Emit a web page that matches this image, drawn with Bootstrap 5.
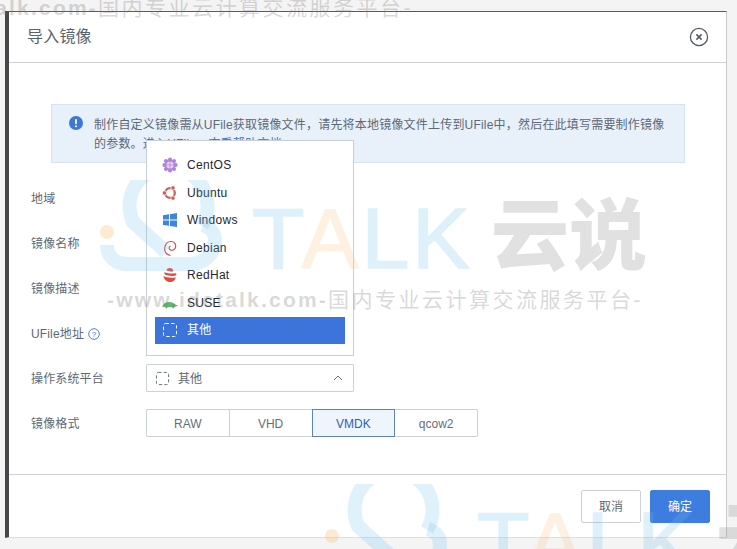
<!DOCTYPE html>
<html lang="zh">
<head>
<meta charset="utf-8">
<title>导入镜像</title>
<link href="https://cdn.jsdelivr.net/npm/bootstrap@5.3.0/dist/css/bootstrap.min.css" rel="stylesheet">
<style>
html,body{height:549px;overflow:hidden}
body{background:#f4f4f5;font-family:"Liberation Sans","Noto Sans CJK SC",sans-serif;font-size:12px;color:#5d6875;padding:11px 10px 0 5px}
.shell{height:527px;background:#fff;border-left:4px solid #45474b;border-top:1px solid #5a5c60;border-right:1px solid #c6cacf;border-bottom:1px solid #dcdee1}
.dlg-head{height:51px;border-bottom:1px solid #ced3d9;padding:0 17px 0 18px;flex:none}
.dlg-title{font-size:16px;color:#59636f;letter-spacing:.2px}
.notice{margin:41px 41px 21px 42px;height:59px;background:#e8f0fa;border:1px solid #d6e3f2;padding:11px 10px 0 17px;line-height:19px;gap:11px;letter-spacing:.2px;flex:none}
.notice svg{flex:none}
.notice a{color:#3d6fc4;text-decoration:none}
.form-line{height:28px;margin-bottom:17px;padding-left:22px;flex:none}
.form-line label{width:115px;flex:none;margin:0;padding-top:1px;color:#5d6875;letter-spacing:.15px}
.ctl{width:208px;height:28px;flex:none}
.pick{border:1px solid #ccd1d7;border-radius:1px;padding:0 10px 0 8px;gap:8px;background:#fff;color:#5d6875}
.pick span{padding-top:1px}
.os-menu{position:absolute;left:0;bottom:100%;margin-bottom:8px;width:208px;display:block;border:1px solid #c9ced4;border-radius:0;padding:10.5px 8px 11px;font-size:12px;min-width:0;letter-spacing:.3px}
.os-menu .dropdown-item{height:27.5px;padding:0 7px;gap:9px;color:#1f2733;display:flex;align-items:center}
.os-menu .dropdown-item.active{background:#3d74dc;color:#fff}
.seg .btn{width:83.75px;height:28px;padding:1px 0 0;font-size:12px;color:#666e79;background:#fff;border:1px solid #ccd1d7;border-radius:1px}
.seg .btn.is-on{background:#eef5fd;border-color:#5d83b8;color:#2f62b0;position:relative;z-index:1}
.dlg-foot{height:63px;border-top:1px solid #ced3d9;padding:15px 16px 0 0;gap:9px;margin-top:auto;flex:none}
.dlg-foot .btn{width:60px;height:33px;padding:0;font-size:12px;border-radius:2px}
.btn-cancel{border:1px solid #ccd1d7;color:#5d6875;background:#fff}
.btn-ok{background:#3e7de0;border:1px solid #3e7de0;color:#fff}
.wm{position:absolute;left:0;top:0;width:737px;height:549px;overflow:hidden;pointer-events:none;z-index:2000}
.wm-set{position:absolute;width:560px;height:140px}
.wm-one{left:100px;top:180px}
.wm-two{left:325px;top:484px}
.wm-three{left:-130px;top:-112px}
.wm-logo{position:absolute;left:0;top:0}
.wm-talk{position:absolute;left:152px;top:15px;font-size:86px;line-height:1;letter-spacing:3px;color:#6ebeeb;-webkit-text-stroke:1.6px #6ebeeb;opacity:.22;white-space:nowrap}
.wm-talk i{font-style:normal;color:#fbc27c;-webkit-text-stroke:1px #fbc27c}
.wm-cn{position:absolute;left:391px;top:7px;font-size:78px;line-height:100px;font-weight:900;color:rgba(140,140,140,.26);white-space:nowrap}
.wm-line{position:absolute;left:7px;top:106px;font-size:21px;line-height:28px;letter-spacing:2.5px;color:rgba(120,120,120,.3);white-space:nowrap}
.wm-line b{font-weight:700;letter-spacing:2.2px}
</style>
</head>
<body>
<div class="shell d-flex flex-column position-relative">
  <div class="dlg-head d-flex align-items-center justify-content-between">
    <div class="dlg-title">导入镜像</div>
    <svg width="20" height="20" viewBox="0 0 20 20" fill="none" stroke="#555c66"><circle cx="10" cy="10" r="8.6" stroke-width="1.3"/><path d="M7.4 7.4l5.2 5.2M12.6 7.4l-5.2 5.2" stroke-width="1.6"/></svg>
  </div>
  <div class="notice d-flex">
    <svg width="14" height="14" viewBox="0 0 14 14"><circle cx="7" cy="7" r="7" fill="#3d78d8"/><rect x="6.1" y="3" width="1.8" height="5.2" rx=".9" fill="#fff"/><circle cx="7" cy="10.2" r="1" fill="#fff"/></svg>
    <div>制作自定义镜像需从UFile获取镜像文件，请先将本地镜像文件上传到UFile中，然后在此填写需要制作镜像<br>的参数。<a href="#">进入UFile</a>，<a href="#">查看帮助文档</a></div>
  </div>
  <div class="form-line d-flex align-items-center"><label>地域</label><div class="ctl"></div></div>
  <div class="form-line d-flex align-items-center"><label>镜像名称</label><div class="ctl"></div></div>
  <div class="form-line d-flex align-items-center"><label>镜像描述</label><div class="ctl"></div></div>
  <div class="form-line d-flex align-items-center"><label class="d-flex align-items-center gap-1">UFile地址
    <svg width="12" height="12" viewBox="0 0 12 12"><circle cx="6" cy="6" r="5.3" fill="none" stroke="#3d74c8" stroke-width=".9"/><text x="6" y="8.8" font-size="8" text-anchor="middle" fill="#3d74c8" font-family="Liberation Sans">?</text></svg></label><div class="ctl"></div></div>
  <div class="form-line d-flex align-items-center"><label>操作系统平台</label>
    <div class="ctl position-relative">
      <div class="dropdown-menu os-menu">
        <a class="dropdown-item" href="#"><svg width="16" height="16" viewBox="0 0 16 16"><g fill="#b07fd8"><circle cx="8" cy="2.4" r="2"/><circle cx="8" cy="13.6" r="2"/><circle cx="2.4" cy="8" r="2"/><circle cx="13.6" cy="8" r="2"/><circle cx="4" cy="4" r="2"/><circle cx="12" cy="4" r="2"/><circle cx="4" cy="12" r="2"/><circle cx="12" cy="12" r="2"/><circle cx="8" cy="8" r="5"/></g><circle cx="8" cy="8" r="3.6" fill="#e6d6f5"/><path d="M8 4.400v7.200M4.400 8h7.200" stroke="#b07fd8" stroke-width=".7"/></svg>CentOS</a>
        <a class="dropdown-item" href="#"><svg width="16" height="16" viewBox="0 0 16 16"><circle cx="8" cy="8" r="4.8" fill="none" stroke="#c4605a" stroke-width="2.2"/><g fill="#c4605a" stroke="#fff" stroke-width=".8"><circle cx="2.4" cy="8" r="2.2"/><circle cx="11" cy="2.9" r="2.2"/><circle cx="11" cy="13.1" r="2.2"/></g></svg>Ubuntu</a>
        <a class="dropdown-item" href="#"><svg width="16" height="16" viewBox="0 0 16 16" fill="#3f86d8"><path d="M1 3.2l6-.9v5.3H1zM7.9 2.2L15 1v6.6H7.9zM1 8.5h6v5.3l-6-.9zM7.9 8.5H15V15l-7.1-1.1z"/></svg>Windows</a>
        <a class="dropdown-item" href="#"><svg width="16" height="16" viewBox="0 0 16 16" fill="none" stroke="#cf4f4f" stroke-width="1.1"><path d="M8.500 15.500C4.500 14.500 2.300 11.500 2.700 7.800 3.100 3.500 6.300 1.200 9.600 1.500 12.800 1.800 14.200 4.800 13.500 7.500 12.800 10 9.800 11 8 9.700 6.500 8.600 7 6.300 8.800 6"/></svg>Debian</a>
        <a class="dropdown-item" href="#"><svg width="16" height="16" viewBox="0 0 16 16" fill="#e8483f"><path d="M4.500 3.400C5 1.600 6.500.8 8.200 1c1.500.2 2.800 1 3 2.400.1.8-.5 1.200-1.400 1.200-1.400 0-3.200-.6-5.300-1.200z"/><path d="M2.500 5.200c2 .5 5 1.400 7.600 1.400 1.600 0 2.800-.4 3.600-.3.8.2 1 1 .4 1.700-.9 1-2.600 1.100-4.400 1L3.800 7.900C2.700 7.500 1.900 6.300 2.500 5.200z"/><path d="M1.400 9c1.800 1 5.200 1.500 8 1.700 1.600.1 3.200 0 4.400-.5-.2 2.300-2.400 4.800-5.600 4.800-3.400 0-6.400-2.600-6.800-6z"/></svg>RedHat</a>
        <a class="dropdown-item" href="#"><svg width="16" height="16" viewBox="0 0 16 16" fill="#5fb86a"><path d="M0 12c1.200-3.400 4-5 7-5 3.200 0 5.400 1.200 6.400 2.800.8 0 1.700.2 2.600.8-.7.7-1.900.9-3 .8-.6 1.300-1.300 2-2.200 2.200l-.7-1.500c-1.200.3-3 .3-4.300 0l-.7 1.500c-1-.2-1.700-.8-2-1.700C1.500 11.700.7 11.800 0 12z"/></svg>SUSE</a>
        <a class="dropdown-item active" href="#"><svg width="16" height="16" viewBox="0 0 16 16" fill="none" stroke="#fff" stroke-width="1" stroke-dasharray="3.4 2.3"><rect x="1.500" y="1.500" width="13" height="13" rx="2"/></svg>其他</a>
      </div>
      <div class="pick ctl d-flex align-items-center">
        <svg width="15" height="15" viewBox="0 0 16 16" fill="none" stroke="#5d6875" stroke-width="1" stroke-dasharray="3.4 2.3"><rect x="1.500" y="1.500" width="13" height="13" rx="2"/></svg>
        <span>其他</span>
        <svg class="ms-auto" width="10" height="6" viewBox="0 0 10 6" fill="none" stroke="#6d7680" stroke-width="1"><path d="M1 5l4-4 4 4"/></svg>
      </div>
    </div>
  </div>
  <div class="form-line d-flex align-items-center"><label>镜像格式</label>
    <div class="btn-group seg" role="group">
      <button type="button" class="btn">RAW</button>
      <button type="button" class="btn">VHD</button>
      <button type="button" class="btn is-on">VMDK</button>
      <button type="button" class="btn">qcow2</button>
    </div>
  </div>
  <div class="dlg-foot d-flex justify-content-end align-items-start">
    <button type="button" class="btn btn-cancel">取消</button>
    <button type="button" class="btn btn-ok">确定</button>
  </div>
</div>
<div class="wm">
  <div class="wm-set wm-three"><div class="wm-line"><b>-www.idctalk.com-</b>国内专业云计算交流服务平台-</div></div>
  <div class="wm-set wm-one">
    <svg class="wm-logo" width="140" height="110" viewBox="0 0 140 110" fill="none">
      <circle cx="7" cy="52" r="7" fill="rgba(250,190,110,.32)"/>
      <path d="M66 72L33 42A39 39 0 1 1 102 46" stroke="rgba(110,190,235,.22)" stroke-width="14"/>
      <path d="M7 65c0 11 8 19 20 19h62c14 0 26-9 26-24 0-7-5-13-12-15" stroke="rgba(110,190,235,.22)" stroke-width="14"/>
    </svg>
    <div class="wm-talk">T<i>A</i>LK</div>
    <div class="wm-cn">云说</div>
    <div class="wm-line"><b>-www.idctalk.com-</b>国内专业云计算交流服务平台-</div>
  </div>
  <div class="wm-set wm-two">
    <svg class="wm-logo" width="140" height="110" viewBox="0 0 140 110" fill="none">
      <circle cx="7" cy="52" r="7" fill="rgba(250,190,110,.32)"/>
      <path d="M66 72L33 42A39 39 0 1 1 102 46" stroke="rgba(110,190,235,.22)" stroke-width="14"/>
      <path d="M7 65c0 11 8 19 20 19h62c14 0 26-9 26-24 0-7-5-13-12-15" stroke="rgba(110,190,235,.22)" stroke-width="14"/>
    </svg>
    <div class="wm-talk">T<i>A</i>LK</div>
    <div class="wm-cn">云说</div>
  </div>
</div>
<script src="https://cdn.jsdelivr.net/npm/bootstrap@5.3.0/dist/js/bootstrap.bundle.min.js"></script>
</body>
</html>
